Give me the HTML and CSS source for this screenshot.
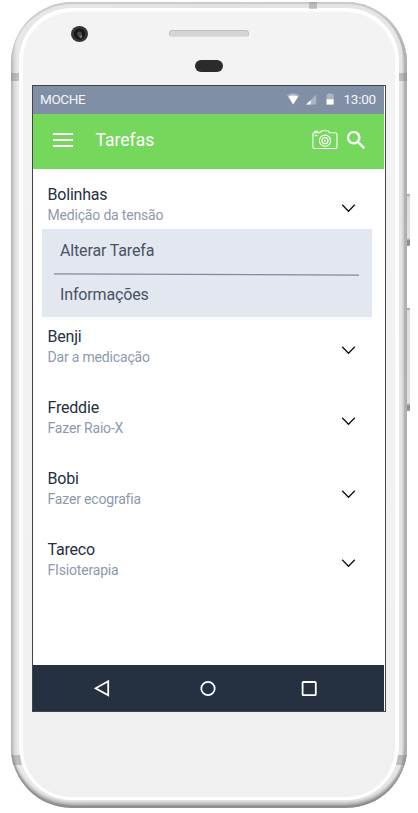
FILE: index.html
```html
<!DOCTYPE html>
<html lang="pt">
<head>
<meta charset="utf-8">
<title>Tarefas</title>
<link rel="stylesheet" href="styles.css">
</head>
<body>
<svg class="defs" width="0" height="0" aria-hidden="true">
  <symbol id="chevron" viewBox="0 0 15 10"><path d="M1.2 1.7 7.5 8.2 13.8 1.7" fill="none" stroke="#111" stroke-width="1.3"/></symbol>
</svg>
<div class="phone">
  <i class="button power"></i>
  <i class="button volume"></i>
  <div class="bezel">
    <div class="ring">
      <div class="face">
        <main class="screen">
          <header class="status">
            <span>MOCHE</span>
            <svg class="signals" width="48" height="13" viewBox="0 0 48 13">
              <path d="M0 2.2Q6-1.8 12.4 2.2L6.2 11.4Z" fill="#aab4c4"/>
              <path d="M1.3 3.5Q6.2 1.6 11.1 3.5L6.2 11.4Z" fill="#fff"/>
              <path d="M19.2 11.4 29.2 1.4V11.4Z" fill="#aab4c4"/>
              <path d="M19.2 11.4 23.7 6.9V11.4Z" fill="#fff"/>
              <path d="M39.5 6.5V2.3Q39.5 1.1 41 1V.5H45V1Q46.7 1.1 46.7 2.3V6.5Z" fill="#aab4c4"/>
              <path d="M39.5 6.2H46.7V11.6H39.5Z" fill="#fff"/>
            </svg>
            <time>13:00</time>
          </header>
          <div class="toolbar">
            <svg width="20" height="14" viewBox="0 0 20 14"><path d="M0 1H20M0 7H20M0 13H20" stroke="#fff" stroke-width="2"/></svg>
            <h1>Tarefas</h1>
            <svg class="camera" width="26" height="20" viewBox="0 0 26 20" fill="none" stroke="#fff" stroke-width="1.1">
              <path d="M2.2 2.7H7.3L9.2 1.6Q9.6.8 10.4.8H15.4Q16.2.8 16.6 1.6L17.3 2.7H23.2Q25 2.7 25 4.4V17Q25 18.5 23.4 18.5H2.5Q.9 18.5.9 17V4.4Q.9 2.7 2.2 2.7"/>
              <path d="M3 2.4V1.5H5.5V2.4M2.8 5.5H5.4" stroke-width="1.4"/>
              <circle cx="13" cy="10.7" r="5.6"/><circle cx="13" cy="10.7" r="3" stroke-width="1.2"/><circle cx="13" cy="10.7" r=".9" fill="#fff" stroke="none"/>
            </svg>
            <svg width="18" height="18" viewBox="3 3 17.5 17.5"><path fill="#fff" stroke="#fff" stroke-width=".3" d="M15.5 14h-.79l-.28-.27A6.47 6.47 0 0 0 16 9.5 6.5 6.5 0 1 0 9.5 16c1.61 0 3.09-.59 4.23-1.57l.27.28v.79l5 4.99L20.49 19l-4.99-5zm-6 0C7.01 14 5 11.99 5 9.5S7.01 5 9.5 5 14 7.01 14 9.5 11.99 14 9.5 14z"/></svg>
          </div>
          <section class="tasks">
            <article class="task open">
              <div><h2>Bolinhas</h2><p>Medição da tensão</p></div>
              <svg class="chevron"><use href="#chevron"/></svg>
            </article>
            <div class="actions">
              <span>Alterar Tarefa</span>
              <svg width="305" height="3" viewBox="0 0 305 3"><path d="M0 .9 305 2.1" stroke="#7f8a9e" stroke-width="1.2"/></svg>
              <span>Informações</span>
            </div>
            <article class="task">
              <div><h2>Benji</h2><p>Dar a medicação</p></div>
              <svg class="chevron"><use href="#chevron"/></svg>
            </article>
            <article class="task">
              <div><h2>Freddie</h2><p>Fazer Raio-X</p></div>
              <svg class="chevron"><use href="#chevron"/></svg>
            </article>
            <article class="task low">
              <div><h2>Bobi</h2><p>Fazer ecografia</p></div>
              <svg class="chevron"><use href="#chevron"/></svg>
            </article>
            <article class="task">
              <div><h2>Tareco</h2><p>FIsioterapia</p></div>
              <svg class="chevron"><use href="#chevron"/></svg>
            </article>
          </section>
          <nav class="nav">
            <svg width="16" height="18" viewBox="0 0 16 18"><path d="M14.2 2.3V16.3L1.6 9.3Z"/></svg>
            <svg class="home" width="16" height="18" viewBox="0 0 16 18"><circle cx="8" cy="9.5" r="6.7"/></svg>
            <svg width="16" height="18" viewBox="0 0 16 18"><rect x="1.6" y="3" width="13.2" height="13.2" rx=".8"/></svg>
          </nav>
        </main>
      </div>
    </div>
  </div>
  <i class="band top"></i>
  <i class="band upper left"></i>
  <i class="band upper right"></i>
  <i class="band lower left"></i>
  <i class="band lower right"></i>
  <i class="lens"></i>
  <i class="speaker"></i>
  <i class="sensor"></i>
</div>
</body>
</html>
```
FILE: styles.css
```css
* { box-sizing: border-box; }
body {
  margin: 0;
  height: 813px;
  overflow: hidden;
  background: #fff;
  font-family: Roboto, "Liberation Sans", sans-serif;
}
h1, h2, p { margin: 0; font-weight: 400; }
.defs { position: absolute; }
svg { display: block; flex: none; }

.phone {
  position: relative;
  width: 396px;
  height: 806px;
  margin: 2px 0 0 11px;
}
.bezel {
  position: relative;
  height: 100%;
  padding: 6px 8px 8px;
  border-radius: 61px;
  background: linear-gradient(90deg, #b9b9b9 0, #d4d4d4 3px, #e8e8e8 6px, #e2e2e2 50%, #e6e6e6 390px, #aeaeae 396px);
  box-shadow: inset 0 2px 1px #c9c9c9, inset 0 -3px 2px #8d8d8d, inset 0 -6px 2px #c4c4c4, inset -3px 0 1px #b2b2b2;
}
.ring {
  height: 100%;
  padding: 4px 4px 3px;
  border-radius: 53px;
  background: #fff;
}
.face {
  height: 100%;
  padding: 73px 0 0 9px;
  border-radius: 49px;
  background: linear-gradient(#f3f3f3, #f0f0f0);
  box-shadow: 0 0 3px #f6f6f6;
}
.screen {
  display: flex;
  flex-direction: column;
  width: 354px;
  height: 627px;
  padding-right: 1px;
  border: 1px solid #444548;
  background: #fff;
}

.status {
  display: flex;
  align-items: center;
  height: 28px;
  padding: 0 8px 2px 7px;
  background: #808fa6;
  color: #f4f6f9;
  font-size: 13.5px;
  letter-spacing: -.35px;
}
.signals { margin: 1px 8px 0 auto; }
.status time { letter-spacing: -.2px; }

.toolbar {
  display: flex;
  align-items: center;
  height: 55px;
  padding: 0 19px 3px 20px;
  background: #76d75d;
  color: #fff;
}
.toolbar h1 {
  margin: 0 auto 0 22.5px;
  font-size: 17.5px;
}
.camera { margin: 0 9px 0 0; }

.tasks { flex: 1; padding-top: 6px; }
.task {
  display: flex;
  justify-content: space-between;
  height: 71px;
  padding: 10px 28px 0 14.5px;
}
.task.open { height: 54px; }
.task h2 { font-size: 16px; line-height: 20px; letter-spacing: -.2px; color: #253040; }
.task p { font-size: 14px; line-height: 20px; letter-spacing: -.18px; color: #8d99ae; }
.chevron { width: 15px; height: 10px; margin-top: 18px; }
.low .chevron { margin-top: 20px; }
.actions {
  display: flex;
  flex-direction: column;
  width: 330px;
  height: 88px;
  margin-left: 9px;
  padding: 0 12px;
  background: #e3e7f0;
  box-shadow: 0 3px #f9fafc;
  color: #4a5263;
  font-size: 16px;
  letter-spacing: -.15px;
}
.actions span { height: 43px; padding-left: 6px; line-height: 43px; }
.actions svg { margin-top: 1px; }
.actions svg + span { height: 41px; line-height: 38px; }

.nav {
  display: flex;
  justify-content: space-between;
  align-items: center;
  height: 46px;
  padding: 0 67px 0 61px;
  background: #253041;
  fill: none;
  stroke: #fff;
  stroke-width: 1.8;
}
.home { margin-left: 4px; }

.button {
  position: absolute;
  left: 395px;
  width: 4px;
  border-radius: 0 1px 1px 0;
  background: linear-gradient(#999, #ddd 3px, #e0e0e0 calc(100% - 8px), #888 calc(100% - 5px), #999);
}
.power { top: 192px; height: 52px; }
.volume { top: 306px; height: 103px; }
.band { position: absolute; background: rgba(120, 120, 120, .38); }
.band.top { left: 298px; top: 0; width: 8px; height: 7px; }
.band.upper { top: 71px; width: 8px; height: 8px; }
.band.lower { top: 753px; width: 9px; height: 10px; }
.band.left { left: 0; }
.band.right { right: 0; }
.band.lower.left { transform: skewX(10deg); left: 1px; }
.band.lower.right { transform: skewX(-10deg); right: 1px; }
.lens {
  position: absolute;
  left: 60px;
  top: 24px;
  width: 17px;
  height: 16px;
  border-radius: 50%;
  background: radial-gradient(circle at 58% 66%, #777c35 0 1px, transparent 2px), radial-gradient(circle, #434953 0 2px, #15171a 3px 5px, #33363a 6px 8px);
}
.speaker {
  position: absolute;
  left: 158px;
  top: 28px;
  width: 80px;
  height: 7px;
  border: 1px solid #bdbdbd;
  border-bottom-color: #ddd;
  border-radius: 4px;
  background: #d5d5d5;
}
.sensor {
  position: absolute;
  left: 184px;
  top: 58px;
  width: 28px;
  height: 12px;
  border-radius: 6px;
  background: #2b2b2b;
}
```
